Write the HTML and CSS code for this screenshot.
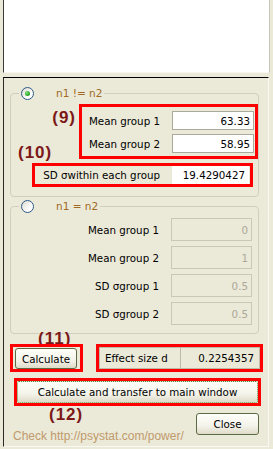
FILE: index.html
```html
<!DOCTYPE html>
<html lang="en">
<head>
<meta charset="UTF-8" />
<title>Effect size from means</title>
<link rel="stylesheet" href="styles.css">
</head>
<body>

<!-- output area of the dialog (empty) -->
<div class="output"></div>

<section class="panel">

  <!-- unequal n -->
  <fieldset class="group first">
    <legend><span class="radio on"></span><span class="legend-text">n1 != n2</span></legend>
    <div class="annot-row">
      <div class="marks">
        <span class="mark mark9">(9)</span>
        <span class="mark mark10">(10)</span>
      </div>
      <div class="redbox box9">
        <div class="row">
          <label>Mean group 1</label>
          <input type="text" value="63.33" />
        </div>
        <div class="row">
          <label>Mean group 2</label>
          <input type="text" value="58.95" />
        </div>
      </div>
    </div>
    <div class="redbox box10">
      <div class="row">
        <label>SD σwithin each group</label>
        <input type="text" value="19.4290427" />
      </div>
    </div>
  </fieldset>

  <!-- equal n -->
  <fieldset class="group second">
    <legend><span class="radio"></span><span class="legend-text">n1 = n2</span></legend>
    <div class="row off">
      <label>Mean group 1</label>
      <input type="text" value="0" disabled />
    </div>
    <div class="row off">
      <label>Mean group 2</label>
      <input type="text" value="1" disabled />
    </div>
    <div class="row off">
      <label>SD σgroup 1</label>
      <input type="text" value="0.5" disabled />
    </div>
    <div class="row off">
      <label>SD σgroup 2</label>
      <input type="text" value="0.5" disabled />
    </div>
  </fieldset>

  <span class="mark mark11">(11)</span>
  <div class="actions">
    <div class="redbox box11">
      <button class="btn calc-btn">Calculate</button>
    </div>
    <div class="redbox box-effect">
      <div class="effect">
        <span class="effect-label">Effect size d</span>
        <span class="effect-value">0.2254357</span>
      </div>
    </div>
  </div>

  <div class="redbox box12">
    <button class="btn transfer-btn">Calculate and transfer to main window</button>
  </div>

  <div class="bottom">
    <div class="bottom-left">
      <span class="mark mark12">(12)</span>
      <div class="check">Check http://psystat.com/power/</div>
    </div>
    <button class="btn close-btn">Close</button>
  </div>

</section>

</body>
</html>
```

FILE: styles.css
```css
/* Base */
* {
  box-sizing: border-box;
}
body {
  margin: 0;
  width: 273px;
  height: 449px;
  overflow: hidden;
  background: #ebe9d8;
  font-family: "DejaVu Sans", sans-serif;
  font-size: 10.3px;
  color: #000;
}

/* Empty output area at the top */
.output {
  height: 73px;
  margin: 0 3px 0 3px;
  background: #fff;
  border-left: 1px solid #3c3c3c;
  border-right: 1px solid #c8c6b8;
  border-bottom: 1px solid #f6f5ef;
}

/* Main panel */
.panel {
  margin: 4px 4px 0 3px;
  height: 370px;
  border-top: 1px solid #000;
  border-left: 1px solid #2a2a2a;
  border-right: 1px solid #f8f8f4;
  border-bottom: 1px solid #f8f8f4;
}

/* Group boxes */
fieldset.group {
  margin: 9px 0 0 6px;
  width: 249px;
  padding: 4px 0 9px 0;
  border: 1px solid #d0cfbf;
  border-radius: 4px;
  min-width: 0;
}
fieldset.second {
  margin-top: 3px;
  padding: 5px 0 8px 0;
}
legend {
  margin-left: 8px;
  padding: 0 2px;
  height: 13px;
  line-height: 13px;
  display: flex;
  align-items: center;
}
.legend-text {
  margin-left: 22px;
  color: #a06a26;
  font-size: 10.5px;
}

/* Radio buttons, XP style */
.radio {
  width: 13px;
  height: 13px;
  border-radius: 50%;
  border: 1px solid #2c5a86;
  background: linear-gradient(135deg, #dcdad0, #fff 70%);
  display: flex;
  align-items: center;
  justify-content: center;
}
.radio.on::after {
  content: "";
  width: 5px;
  height: 5px;
  border-radius: 50%;
  background: radial-gradient(circle at 35% 35%, #7ee07e, #21a121 70%);
}

/* Red annotation marks */
.mark {
  display: block;
  font-family: "Liberation Sans", Arial, sans-serif;
  font-weight: 700;
  font-size: 17px;
  line-height: 16px;
  letter-spacing: 1px;
  color: #7b1818;
}
.redbox {
  border: 3px solid #f00;
}

/* First group */
.annot-row {
  display: flex;
}
.marks {
  width: 68px;
  height: 55px;
}
.mark9 {
  margin-top: 6px;
  text-align: right;
  padding-right: 3px;
}
.mark10 {
  margin-top: 19px;
  padding-left: 7px;
}
.box9 {
  width: 179px;
  padding: 4px 1px 3px 0;
  display: flex;
  flex-direction: column;
  gap: 4px;
}
.box10 {
  margin: 4px 0 0 21px;
  width: 221px;
  height: 24px;
}

/* Label + field rows */
.row {
  display: flex;
  align-items: center;
}
.row label {
  flex: 1;
  text-align: right;
  padding-right: 12px;
  white-space: nowrap;
}
.row input {
  width: 82px;
  height: 19px;
  padding: 0 3px;
  border: 1px solid #a9aa9c;
  background: #fff;
  text-align: right;
  font-family: inherit;
  font-size: inherit;
  color: #000;
  outline: none;
}
.box10 .row input {
  width: 77px;
  height: 18px;
  margin-right: 1px;
  border-color: #fff;
}
.row.off {
  width: 241px;
  margin-bottom: 5px;
}
.row.off:last-child {
  margin-bottom: 0;
}
.row.off input {
  width: 81px;
  height: 23px;
  background: #ebe9d8;
  border: 1px solid #c9c7b6;
  color: #aca899;
}

/* Buttons, XP style */
.btn {
  font-family: inherit;
  font-size: inherit;
  color: #000;
  border: 1px solid #5d6b45;
  border-radius: 3px;
  background: linear-gradient(#fefefa, #f4f3ea 60%, #dedbc8);
  padding: 0;
  cursor: pointer;
}

/* Bottom part */
.mark11 {
  margin: -3px 0 -3px 34px;
}
.actions {
  display: flex;
  margin-left: 6px;
}
.box11 {
  width: 73px;
  height: 28px;
  padding: 1px 2px;
}
.calc-btn {
  width: 62px;
  height: 21px;
}
.box-effect {
  margin-left: 13px;
  width: 167px;
  height: 28px;
}
.effect {
  height: 22px;
  border: 1px solid #bdbaa8;
  display: flex;
  align-items: center;
}
.effect-label {
  width: 80px;
  padding-left: 5px;
}
.effect-value {
  flex: 1;
  height: 100%;
  border-left: 1px solid #bdbaa8;
  text-align: right;
  padding-right: 5px;
  line-height: 20px;
}
.box12 {
  margin: 6px 0 0 10px;
  width: 247px;
  height: 28px;
}
.transfer-btn {
  width: 100%;
  height: 22px;
  border: 1px dotted #4e8c32;
  border-radius: 2px;
}
.bottom {
  display: flex;
  justify-content: space-between;
}
.mark12 {
  margin: 1px 0 0 45px;
}
.check {
  margin: 6px 0 0 9px;
  font-family: "Liberation Sans", Arial, sans-serif;
  font-size: 12px;
  line-height: 14px;
  color: #bf9a6c;
}
.close-btn {
  margin: 7px 9px 0 0;
  width: 63px;
  height: 22px;
}
```
